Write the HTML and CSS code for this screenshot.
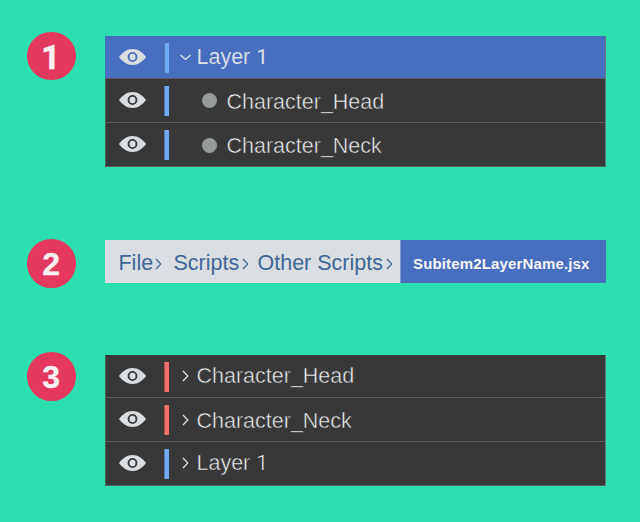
FILE: index.html
```html
<!DOCTYPE html>
<html lang="en">
<head>
<meta charset="utf-8">
<title>Subitem to layer name</title>
<link rel="stylesheet" href="styles.css">
</head>
<body>
<svg class="defs" width="0" height="0" aria-hidden="true">
  <symbol id="eye" viewBox="0 0 27 16">
    <path fill="#dadee1" fill-rule="evenodd" d="M0 8C3.500 3.500 8 0 13.500 0S23.500 3.500 27 8C23.500 12.500 19 16 13.500 16S3.500 12.500 0 8ZM13.500 3a4.900 5 0 1 0 0 10a4.900 5 0 1 0 0-10Z"/>
    <ellipse cx="13.500" cy="8" rx="3" ry="3.200" fill="#dadee1"/>
  </symbol>
  <symbol id="right" viewBox="0 0 7 12"><path d="M1 1L5.800 6L1 11" fill="none" stroke="currentColor" stroke-width="1.200"/></symbol>
  <symbol id="down" viewBox="0 0 12 7"><path d="M.500 1L5.500 5.500L10.500 1" fill="none" stroke="currentColor" stroke-width="1.300"/></symbol>
</svg>
<main>
  <section class="step first">
    <div class="badge one">1</div>
    <div class="panel">
      <div class="row selected"><svg class="eye"><use href="#eye"/></svg><i class="bar"></i><svg class="down"><use href="#down"/></svg><span class="name layer">Layer <span class="digit">1</span></span></div>
      <div class="row child"><svg class="eye"><use href="#eye"/></svg><i class="bar"></i><i class="dot"></i><span class="name low">Character_Head</span></div>
      <div class="row child"><svg class="eye"><use href="#eye"/></svg><i class="bar"></i><i class="dot"></i><span class="name low">Character_Neck</span></div>
    </div>
  </section>
  <section class="step second">
    <div class="badge">2</div>
    <div class="path">
      <div class="crumbs">
        <span class="file">File</span><svg class="right"><use href="#right"/></svg>
        <span class="scripts">Scripts</span><svg class="right"><use href="#right"/></svg>
        <span class="other">Other Scripts</span><svg class="right"><use href="#right"/></svg>
      </div>
      <div class="script"><span>Subitem2LayerName.jsx</span></div>
    </div>
  </section>
  <section class="step third">
    <div class="badge">3</div>
    <div class="panel">
      <div class="row"><svg class="eye"><use href="#eye"/></svg><i class="bar red"></i><svg class="right"><use href="#right"/></svg><span class="name">Character_Head</span></div>
      <div class="row"><svg class="eye"><use href="#eye"/></svg><i class="bar red"></i><svg class="right dropped"><use href="#right"/></svg><span class="name low">Character_Neck</span></div>
      <div class="row"><svg class="eye"><use href="#eye"/></svg><i class="bar"></i><svg class="right"><use href="#right"/></svg><span class="name layer">Layer <span class="digit">1</span></span></div>
    </div>
  </section>
</main>
</body>
</html>
```
FILE: styles.css
```css
* { box-sizing: border-box; }
body { margin: 0; background: #2cdfae; font-family: "Liberation Sans", Arial, sans-serif; }
main { width: 640px; height: 522px; overflow: hidden; padding: 31.700px 0 0 27.300px; }
.defs { display: block; height: 0; }
svg { display: block; }
.step { display: grid; grid-template-columns: 48.600px 501px; column-gap: 29.100px; align-items: start; }
.first { height: 207.300px; }
.second { height: 113px; }
.badge { width: 48.600px; height: 48.600px; padding-right: 1px; border-radius: 50%; background: #e43861; color: #f5eff1; font-size: 32px; line-height: 50px; font-weight: bold; text-align: center; -webkit-text-stroke: .3px #f5eff1; }
.badge.one { padding-right: 2px; font-family: Roboto, sans-serif; font-size: 33px; line-height: 51px; -webkit-text-stroke: .5px #f5eff1; }
.panel { margin-top: 4.300px; border-left: 1px solid #476058; border-right: 1px solid #687773; background: #383838; }
.third .panel { margin-top: 3px; }
.row { height: 44px; border-bottom: 1px solid #5d5d5d; display: grid; grid-template-columns: 45px 16px 14px 1fr; align-items: start; padding-left: 13px; color: #e4e7e9; }
.row:first-child { height: 43px; }
.child { grid-template-columns: 45px 38px 24.500px 1fr; }
.selected { background: #476ebf; margin-left: -1px; padding-left: 14px; }
.eye { width: 27px; height: 16px; margin-top: 13px; }
.bar { width: 5px; height: 30px; margin-top: 7px; background: #6fa8f3; border-left: 1px solid #527cae; }
.red { background: #f1706d; border-left-color: #a95756; }
.dot { width: 15px; height: 15px; border-radius: 50%; background: #959a9a; margin-top: 14px; }
.child:last-child .dot { margin-top: 15px; }
.down { width: 12px; height: 7px; margin-top: 18px; }
.right { width: 7px; height: 12px; }
.row .right { margin: 15px 0 0 2px; }
.row .dropped { margin-top: 16px; }
.name { font-size: 21.500px; line-height: 24px; margin: 9.500px 0 0 2.500px; white-space: nowrap; color: #f0f2f4; -webkit-text-stroke: .5px #383838; }
.digit { font-family: Roboto, sans-serif; font-weight: 300; font-size: 21px; line-height: 1; -webkit-text-stroke: 0; }
.child .name { margin-left: 0; }
.selected .name { color: #dde1e8; -webkit-text-stroke: .15px #476ebf; }
.selected .digit { font-weight: 400; }
.name.low { margin-top: 11.500px; }
.path { display: flex; height: 43px; margin-top: 1px; }
.crumbs { width: 295px; display: grid; grid-template-columns: 37px 18px 69px 15px 129px 7px; align-items: start; padding-left: 13.500px; background: #dadee2; color: #3f6697; font-size: 21.500px; line-height: 24px; white-space: nowrap; }
.crumbs span { margin-top: 11.500px; }
.crumbs .right { margin-top: 18px; }
.script { width: 206px; padding: 15px 0 0 12px; background: #476ebf; border-left: 1px solid #7893ce; color: #f5f6f8; font-size: 15px; font-weight: bold; letter-spacing: .15px; line-height: 17px; white-space: nowrap; }
```
